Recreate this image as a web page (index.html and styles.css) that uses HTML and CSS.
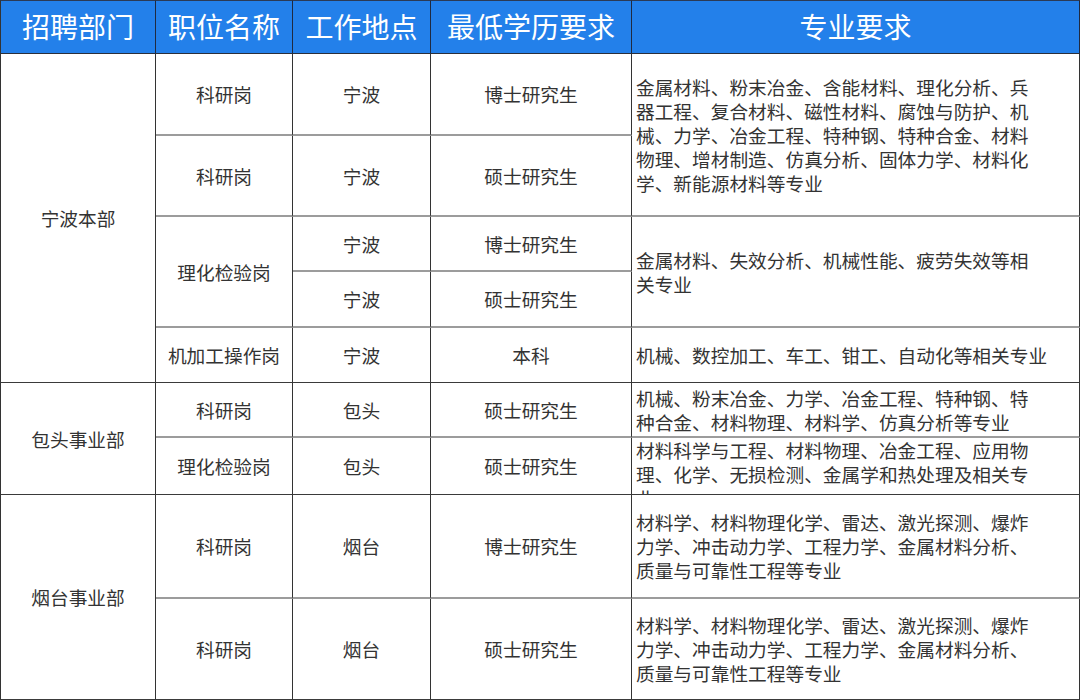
FILE: index.html
```html
<!DOCTYPE html>
<html lang="zh-CN">
<head>
<meta charset="utf-8">
<title>招聘岗位</title>
<link rel="stylesheet" href="styles.css">
</head>
<body>
<div class="grid">
  <div class="c h l">招聘部门</div>
  <div class="c h">职位名称</div>
  <div class="c h">工作地点</div>
  <div class="c h">最低学历要求</div>
  <div class="c h">专业要求</div>

  <div class="c l d r5">宁波本部</div>
  <div class="c g">科研岗</div>
  <div class="c g">宁波</div>
  <div class="c g">博士研究生</div>
  <div class="c g m r2">金属材料、粉末冶金、含能材料、理化分析、兵<br>器工程、复合材料、磁性材料、腐蚀与防护、机<br>械、力学、冶金工程、特种钢、特种合金、材料<br>物理、增材制造、仿真分析、固体力学、材料化<br>学、新能源材料等专业</div>

  <div class="c g">科研岗</div>
  <div class="c g">宁波</div>
  <div class="c g">硕士研究生</div>

  <div class="c g r2">理化检验岗</div>
  <div class="c g">宁波</div>
  <div class="c g">博士研究生</div>
  <div class="c g m r2">金属材料、失效分析、机械性能、疲劳失效等相<br>关专业</div>

  <div class="c g">宁波</div>
  <div class="c g">硕士研究生</div>

  <div class="c d">机加工操作岗</div>
  <div class="c d">宁波</div>
  <div class="c d">本科</div>
  <div class="c d m">机械、数控加工、车工、钳工、自动化等相关专业</div>

  <div class="c l d r2">包头事业部</div>
  <div class="c g">科研岗</div>
  <div class="c g">包头</div>
  <div class="c g">硕士研究生</div>
  <div class="c g m">机械、粉末冶金、力学、冶金工程、特种钢、特<br>种合金、材料物理、材料学、仿真分析等专业</div>

  <div class="c d">理化检验岗</div>
  <div class="c d">包头</div>
  <div class="c d">硕士研究生</div>
  <div class="c d m top">材料科学与工程、材料物理、冶金工程、应用物<br>理、化学、无损检测、金属学和热处理及相关专<br>业</div>

  <div class="c l d r2">烟台事业部</div>
  <div class="c g">科研岗</div>
  <div class="c g">烟台</div>
  <div class="c g">博士研究生</div>
  <div class="c g m">材料学、材料物理化学、雷达、激光探测、爆炸<br>力学、冲击动力学、工程力学、金属材料分析、<br>质量与可靠性工程等专业</div>

  <div class="c d">科研岗</div>
  <div class="c d">烟台</div>
  <div class="c d">硕士研究生</div>
  <div class="c d m">材料学、材料物理化学、雷达、激光探测、爆炸<br>力学、冲击动力学、工程力学、金属材料分析、<br>质量与可靠性工程等专业</div>
</div>
</body>
</html>
```

FILE: styles.css
```css
* { box-sizing: border-box; }

html, body {
  margin: 0;
  padding: 0;
  background: #ffffff;
}

body {
  font-family: "Noto Sans CJK SC", "Noto Sans", sans-serif;
  color: #333333;
}

.grid {
  display: grid;
  width: 1080px;
  height: 700px;
  grid-template-columns: 156px 137px 138px 201px 1fr;
  grid-template-rows: 54px 82px 81px 55px 56px 55px 55px 57px 104px 101px;
}

.c {
  display: flex;
  align-items: center;
  justify-content: center;
  text-align: center;
  font-size: 18.7px;
  line-height: 24px;
  border-right: 1px solid #333333;
  overflow: hidden;
  white-space: nowrap;
}

.l { border-left: 1px solid #333333; }

.h {
  background: #2380ea;
  color: #ffffff;
  font-size: 28px;
  line-height: 34px;
  border-top: 1px solid #2b3a55;
  border-bottom: 1px solid #2b2f3a;
  border-right-color: #1f2a40;
  padding-bottom: 2px;
}

.g { border-bottom: 2px solid #9c9c9c; }
.d { border-bottom: 1px solid #3a3a3a; }

.l.d { border-bottom: 1px solid #3a3a3a; }

.r2 { grid-row: span 2; }
.r5 { grid-row: span 5; }

.m {
  justify-content: flex-start;
  text-align: left;
  padding-left: 4px;
}

.top {
  align-items: flex-start;
}
```
